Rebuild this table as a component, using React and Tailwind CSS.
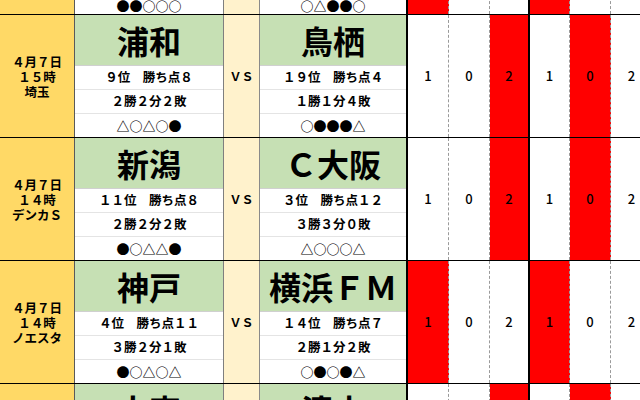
import React from "react";

const blocks = [
  {
    date: ["４月７日", "１４時", "等々力"],
    home: { name: "川崎Ｆ", rank: "６位　勝ち点９", record: "２勝３分１敗", form: "●●○○○" },
    away: { name: "甲府", rank: "１２位　勝ち点７", record: "２勝１分３敗", form: "○△●●○" },
    reds: [0, 3],
    top: true,
  },
  {
    date: ["４月７日", "１５時", "埼玉"],
    home: { name: "浦和", rank: "９位　勝ち点８", record: "２勝２分２敗", form: "△○△○●" },
    away: { name: "鳥栖", rank: "１９位　勝ち点４", record: "１勝１分４敗", form: "○●●●△" },
    reds: [2, 4],
  },
  {
    date: ["４月７日", "１４時", "デンカＳ"],
    home: { name: "新潟", rank: "１１位　勝ち点８", record: "２勝２分２敗", form: "●○△△●" },
    away: { name: "Ｃ大阪", rank: "３位　勝ち点１２", record: "３勝３分０敗", form: "△○○○△" },
    reds: [2, 4],
  },
  {
    date: ["４月７日", "１４時", "ノエスタ"],
    home: { name: "神戸", rank: "４位　勝ち点１１", record: "３勝２分１敗", form: "●○△○△" },
    away: { name: "横浜ＦＭ", rank: "１４位　勝ち点７", record: "２勝１分２敗", form: "○●○●△" },
    reds: [0, 3],
  },
  {
    date: ["４月７日", "１４時", "ＮＡＣＫ"],
    home: { name: "大宮", rank: "１８位　勝ち点４", record: "１勝１分４敗", form: "●●△○●" },
    away: { name: "清水", rank: "１０位　勝ち点８", record: "２勝２分２敗", form: "○△●○△" },
    reds: [2, 4],
  },
];

// score columns: width + right border
const scoreCols = [
  { v: "1", cls: "w-[41px] border-r border-dashed border-[#9a9a9a]" },
  { v: "0", cls: "w-[41px] border-r border-dashed border-[#9a9a9a]" },
  { v: "2", cls: "w-[40px] border-r-2 border-black" },
  { v: "1", cls: "w-[40px] border-r border-dashed border-[#9a9a9a]" },
  { v: "0", cls: "w-[41px] border-r border-dashed border-[#9a9a9a]" },
  { v: "2", cls: "w-[41px]" },
];

function TeamCell({ team, width, last, top }) {
  return (
    <div className={`flex flex-col ${width} ${last ? "border-r-2 border-black" : "border-r border-[#7f7f7f]"}`}>
      <div className="flex h-[51px] items-center justify-center border-b border-[#d0d0d0] bg-[#c6e0b4] text-[32px] font-bold leading-none">
        {team.name}
      </div>
      <div className="flex h-[24px] items-center justify-center border-b border-[#e4e4e4] text-[12.5px] font-bold">
        {team.rank}
      </div>
      <div className="flex h-[24px] items-center justify-center border-b border-[#e4e4e4] text-[12.5px] font-bold">
        {team.record}
      </div>
      <div
        className={`flex h-[23px] items-center justify-center text-[13px] font-bold ${top ? "pt-[6px]" : ""}`}
      >
        {team.form}
      </div>
    </div>
  );
}

function Block({ b }) {
  return (
    <div className="flex h-[123px] border-b border-black">
      {/* date */}
      <div className="flex w-[75px] flex-col items-center justify-center border-r border-[#5a5a5a] bg-[#ffd966] text-[12.5px] font-bold leading-[15px]">
        {b.date.map((d, i) => (
          <div key={i}>{d}</div>
        ))}
      </div>

      <TeamCell team={b.home} width="w-[149px]" top={b.top} />

      {/* vs */}
      <div className="flex w-[36px] items-center justify-center border-r border-[#8a8a8a] bg-[#fff2cc] text-[12px] font-bold">
        ＶＳ
      </div>

      <TeamCell team={b.away} width="w-[148px]" last top={b.top} />

      {/* toto picks */}
      {scoreCols.map((c, i) => (
        <div
          key={i}
          className={`flex shrink-0 items-center justify-center text-[13px] font-medium ${c.cls} ${
            b.reds.includes(i) ? "bg-[#ff0000]" : "bg-white"
          }`}
        >
          {c.v}
        </div>
      ))}
    </div>
  );
}

export default function App() {
  return (
    <div className="h-[400px] w-[640px] overflow-hidden bg-white font-['Noto_Sans_CJK_JP',sans-serif] text-black">
      <div className="-mt-[108px] w-[660px]">
        {blocks.map((b, i) => (
          <Block key={i} b={b} />
        ))}
      </div>
    </div>
  );
}
